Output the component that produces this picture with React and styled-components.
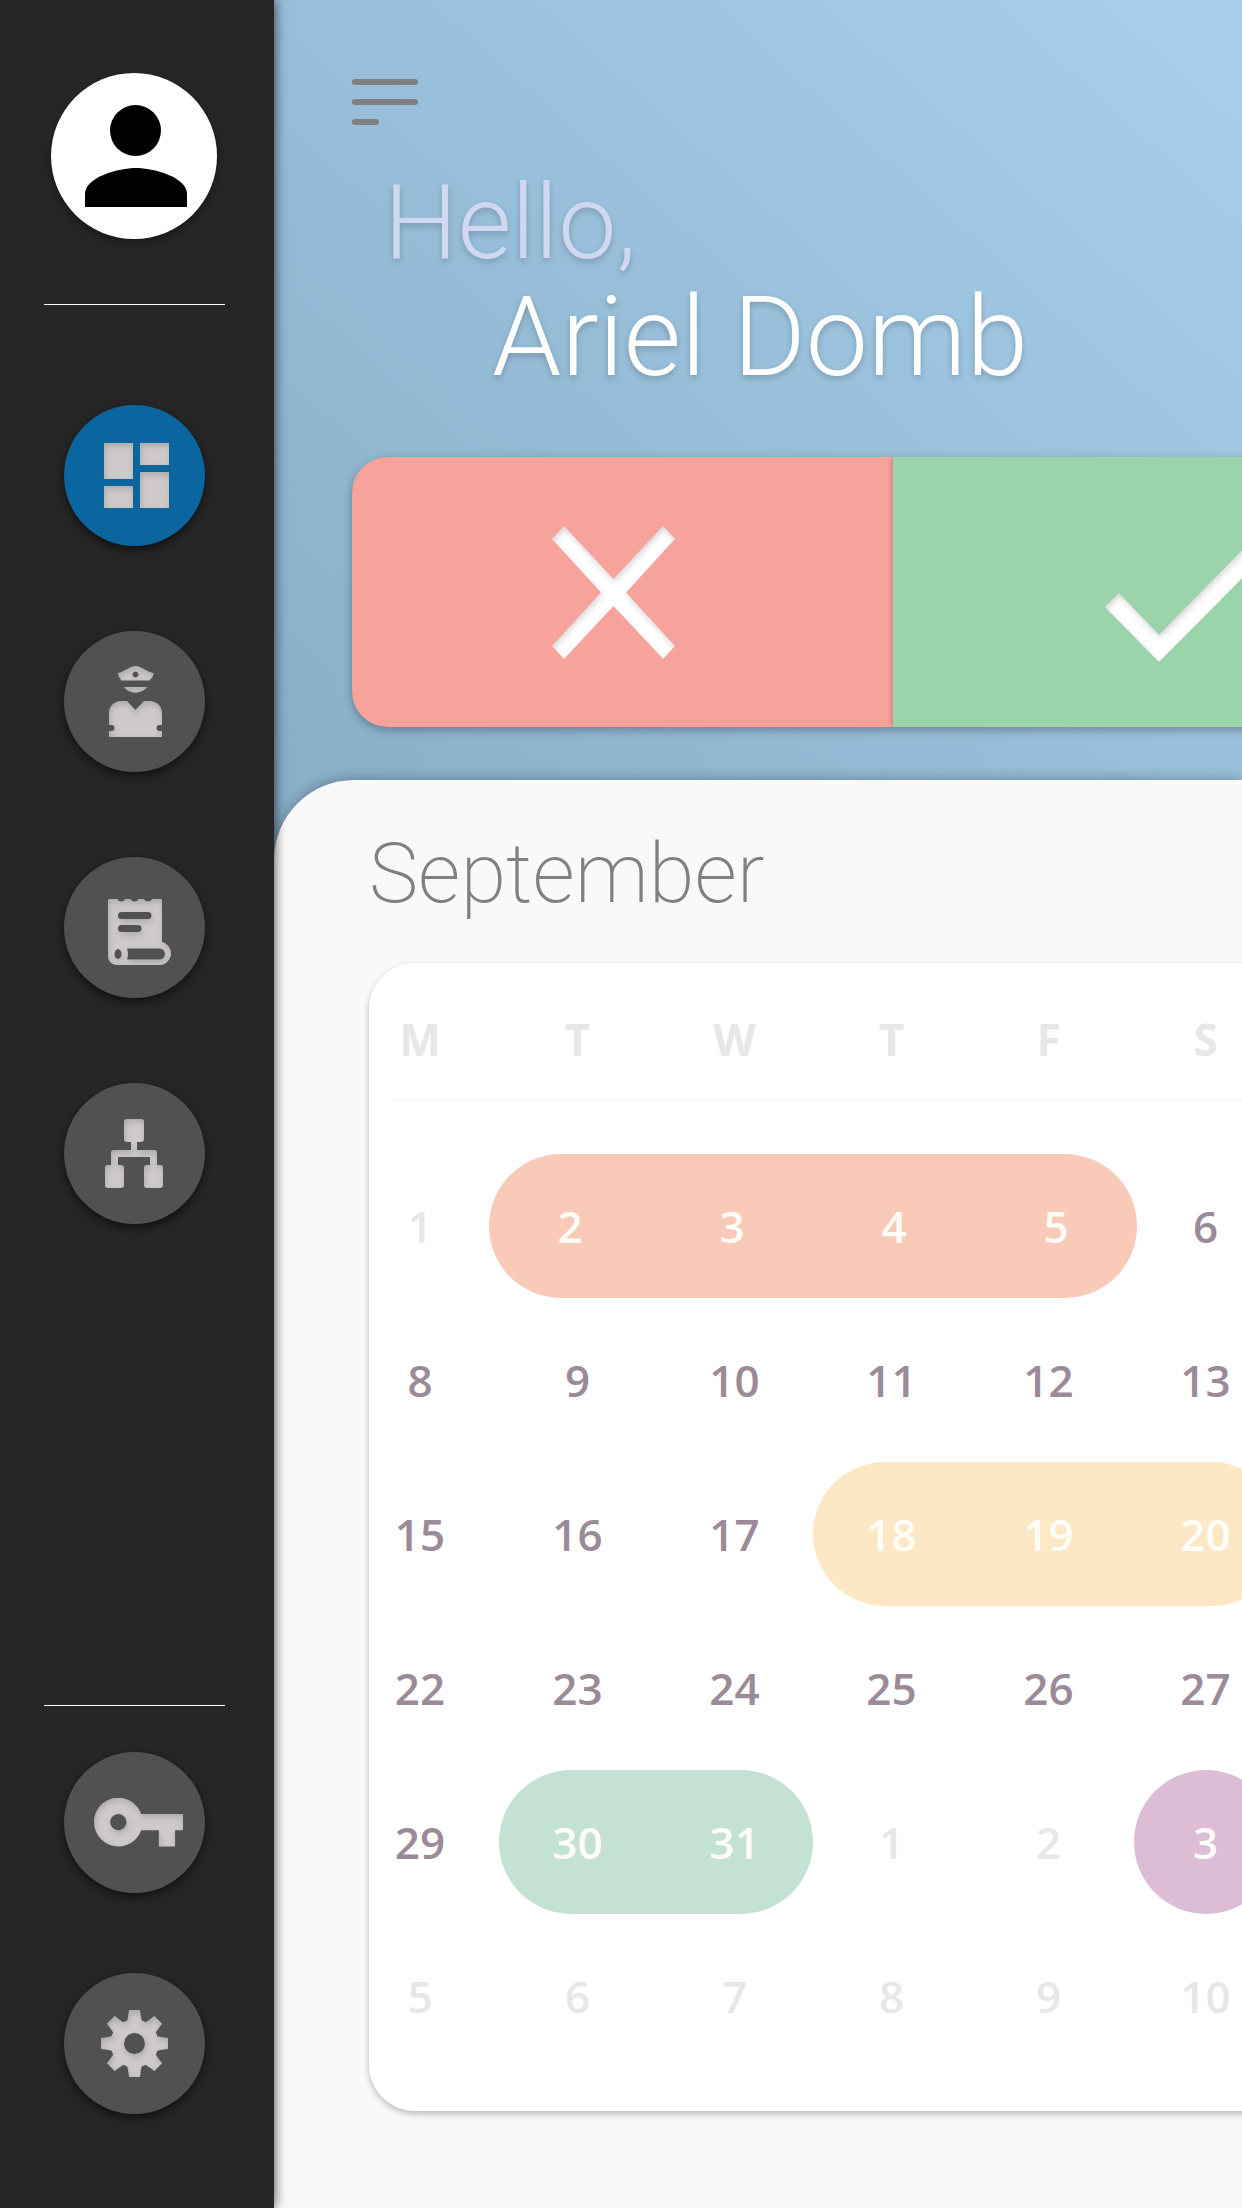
import React from "react";
import styled, { createGlobalStyle } from "styled-components";

const Global = createGlobalStyle`
  * { box-sizing: border-box; }
  body { margin: 0; font-family: Roboto, "Liberation Sans", sans-serif; }
  button { border: 0; padding: 0; margin: 0; font: inherit; cursor: pointer; }
  h1, h2 { margin: 0; }
`;

const Screen = styled.div`
  display: flex;
  min-height: 100vh;
  overflow: hidden;
`;

const Sidebar = styled.nav`
  flex: 0 0 274px;
  z-index: 1;
  display: flex;
  flex-direction: column;
  align-items: center;
  padding: 73px 6px 94px 0;
  background: #262626;
  box-shadow: 0 0 12px rgba(0, 0, 0, 0.75);
`;

const Avatar = styled.button`
  display: flex;
  align-items: center;
  justify-content: center;
  width: 166px;
  height: 166px;
  border-radius: 50%;
  background: #fff;
  box-shadow: 0 4px 8px rgba(0, 0, 0, 0.35);
`;

const Divider = styled.hr`
  width: 181px;
  height: 1px;
  margin: 65px 0 0;
  border: 0;
  background: #fff;
`;

const NavGroup = styled.div`
  display: flex;
  flex-direction: column;
  gap: ${(p) => p.$gap}px;
  margin-top: ${(p) => p.$top}px;
`;

const Bottom = styled.div`
  margin-top: auto;
  display: flex;
  flex-direction: column;
  align-items: center;
`;

const NavButton = styled.button`
  display: flex;
  align-items: center;
  justify-content: center;
  width: 141px;
  height: 141px;
  border-radius: 50%;
  background: ${(p) => (p.$active ? "#0b659f" : "#515151")};
  box-shadow: 0 4px 10px rgba(0, 0, 0, 0.55);
`;

const Main = styled.main`
  flex: 1;
  min-width: 0;
  display: flex;
  flex-direction: column;
  background: linear-gradient(222deg, #a9d0eb 0, #87adc7 1280px);
`;

const Header = styled.header`
  display: flex;
  flex-direction: column;
  align-items: flex-start;
  padding: 79px 0 53px 78px;
`;

const MenuButton = styled.button`
  display: flex;
  flex-direction: column;
  gap: 14px;
  background: none;
`;

const Bar = styled.span`
  width: ${(p) => (p.$short ? 27 : 66)}px;
  height: 6px;
  border-radius: 3px;
  background: #808080;
`;

const Greeting = styled.h1`
  display: flex;
  flex-direction: column;
  margin: 38px 0 65px;
  font-weight: 300;
  white-space: nowrap;
  text-shadow: 0 3px 6px rgba(0, 0, 0, 0.2);
`;

const Hello = styled.span`
  padding-left: 32px;
  font-size: 104px;
  line-height: 120px;
  color: #d0d7f0;
`;

const Name = styled.span`
  padding-left: 140px;
  font-size: 111px;
  line-height: 109px;
  color: #fff;
`;

const Answers = styled.div`
  display: flex;
  box-shadow: 0 3px 10px rgba(0, 0, 0, 0.3);
  border-radius: 36px;
  overflow: hidden;
`;

const Answer = styled.button`
  flex: none;
  display: flex;
  align-items: center;
  justify-content: center;
  width: ${(p) => (p.$yes ? 594 : 541)}px;
  height: 270px;
  padding-right: ${(p) => (p.$yes ? 0 : 18)}px;
  background: ${(p) => (p.$yes ? "#9bd3aa" : "#f7a29b")};
  box-shadow: 0 0 6px rgba(0, 0, 0, 0.3);
`;

const Panel = styled.section`
  flex: 1;
  padding: 46px 0 97px 95px;
  border-radius: 80px 0 0 0;
  background: #f9f9f9;
  box-shadow: 0 -2px 12px rgba(0, 0, 0, 0.25);
`;

const Month = styled.h2`
  font-weight: 200;
  font-size: 83px;
  line-height: 96px;
  color: #808080;
`;

const Card = styled.div`
  margin-top: 41px;
  margin-right: -80px;
  padding: 16px 0 38px;
  border-radius: 46px;
  background: #fff;
  box-shadow: 0 3px 6px rgba(0, 0, 0, 0.25);
`;

const Table = styled.table`
  table-layout: fixed;
  width: 915px;
  border-collapse: collapse;
  font: 600 44px/60px "Open Sans", "Noto Sans", sans-serif;
  color: #9b8a97;
`;

const FirstCol = styled.col`
  width: 130px;
`;

const HeadCell = styled.th`
  height: 120px;
  padding: 0;
  font-weight: 700;
  color: #e6e7e9;
  &:first-child { padding-right: 28px; }
`;

const Rule = styled.td`
  height: 50px;
  padding: 0 0 0 22px;
  vertical-align: top;
  &::before {
    content: "";
    display: block;
    height: 3px;
    margin-right: -200px;
    background: #f9f9fa;
  }
`;

const Cell = styled.td`
  height: 154px;
  padding: 0;
  text-align: center;
  color: ${(p) => (p.$faded ? "#e6e7e9" : "inherit")};
  &:first-child { padding-right: 28px; }
`;

const Range = styled.div`
  display: flex;
  align-items: center;
  justify-content: space-around;
  height: 144px;
  margin: 0 ${(p) => (p.$wide ? -10 : 0)}px;
  border-radius: 72px;
  background: ${(p) => p.$color};
  color: #fffdf8;
`;

const Dot = styled(Range)`
  width: 144px;
  margin: 0 auto;
`;

const InnerShade = () => (
  <filter id="inner" x="-10%" y="-10%" width="120%" height="120%">
    <feComponentTransfer in="SourceAlpha" result="inv">
      <feFuncA type="table" tableValues="1 0" />
    </feComponentTransfer>
    <feGaussianBlur in="inv" stdDeviation="3" />
    <feOffset dx="1" dy="3" result="off" />
    <feFlood floodColor="#000" floodOpacity="0.35" />
    <feComposite in2="off" operator="in" />
    <feComposite in2="SourceAlpha" operator="in" result="shade" />
    <feMerge>
      <feMergeNode in="SourceGraphic" />
      <feMergeNode in="shade" />
    </feMerge>
  </filter>
);

const Icon = ({ w, h, left = 0, top = 0, fill = "#cfcaca", children }) => (
  <svg
    width={w + left}
    height={h + top}
    viewBox={`${-left} ${-top} ${w + left} ${h + top}`}
    fill={fill}
    aria-hidden="true"
  >
    <defs><InnerShade /></defs>
    <g filter="url(#inner)">{children}</g>
  </svg>
);

const Person = () => (
  <svg width="106" height="102" viewBox="-4 0 106 102" aria-hidden="true">
    <circle cx="50.500" cy="25.500" r="25.500" />
    <path d="M0 102V89C0 72 34 63 51 63s51 9 51 26v13z" />
  </svg>
);

const Dashboard = () => (
  <Icon w={65} h={65} left={5}>
    <path d="M0 0h29v36H0zM36 0h29v22H36zM36 29h29v36H36zM0 43h29v22H0z" />
  </Icon>
);

const Officer = () => (
  <Icon w={53} h={71} left={3}>
    <path fillRule="evenodd" d="M9 7C15 6 21 0 26.500 0S38 6 44.500 7c0 3-1 4-4 7.500h-28C10 11 9 9 9 7zM26.500 5.500a3 3 0 1 0 .01 0z" />
    <path d="M15 21h23c-3 4-7 5.500-11.500 5.500S18 25 15 21z" />
    <path d="M0 71v-6h2.500a3 3 0 0 0 0-6H0V48c0-8 5-13 13-13h5l8.500 9 8.500-9h5c8 0 13 5 13 13v11h-2.500a3 3 0 0 0 0 6H53v6z" />
  </Icon>
);

const Scroll = () => (
  <Icon w={63} h={66} left={11} top={9}>
    <path fillRule="evenodd" d="M0 1.500Q0 0 1.500 0H9q4 5 8.500 0H22q4.500 5 9 0h4.500q4.500 5 9 0H52.500Q54 0 54 1.500V43c5 1 9 6 9 11.500S58 66 52 66H9c-5 0-9-4-9-9zM13.500 13a3.500 3.500 0 0 0 0 7h26.500a3.500 3.500 0 0 0 0-7zM13.500 26a3.500 3.500 0 0 0 0 7H30a3.500 3.500 0 0 0 0-7zM10 50a3.500 5 0 1 0 .01 0zM19 49.500q2 5.500 0 11h32.500a5.500 5.500 0 0 0 0-11z" />
  </Icon>
);

const OrgChart = () => (
  <Icon w={58} h={69}>
    <path d="M22 0h14q3 0 3 3v17q0 3-3 3h-4v8h17q3 0 3 3v12h3q3 0 3 3v17q0 3-3 3H42q-3 0-3-3V49q0-3 3-3h3v-8H13v8h3q3 0 3 3v17q0 3-3 3H3q-3 0-3-3V49q0-3 3-3h3V34q0-3 3-3h17v-8h-4q-3 0-3-3V3q0-3 3-3z" />
  </Icon>
);

const KeyIcon = () => (
  <Icon w={89} h={49} left={9}>
    <path transform="translate(-4 -24.500) scale(4.050)" d="M12.650 10C11.830 7.670 9.610 6 7 6c-3.310 0-6 2.690-6 6s2.690 6 6 6c2.610 0 4.830-1.670 5.650-4H17v4h4v-4h2v-4H12.650zM7 14c-1.100 0-2-.9-2-2s.9-2 2-2 2 .9 2 2-.9 2-2 2z" />
  </Icon>
);

const teeth = [0, 45, 90, 135, 180, 225, 270, 315];

const Gear = () => (
  <Icon w={67} h={67}>
    <mask id="hub">
      <rect width="67" height="67" fill="#fff" />
      <circle cx="33.500" cy="33.500" r="10.500" fill="#000" />
    </mask>
    <g mask="url(#hub)">
      <circle cx="33.500" cy="33.500" r="24" />
      {teeth.map((a) => (
        <path key={a} d="M25 14Q27 10 28 0h11q1 10 3 14z" transform={`rotate(${a} 33.500 33.500)`} />
      ))}
    </g>
  </Icon>
);

const Cross = () => (
  <Icon w={123} h={133} fill="#fff">
    <path d="M12 0L61.500 53 111 0l12 13-49 53.500L123 120l-12 13-49.500-53L12 133 0 120l49-53.500L0 13z" />
  </Icon>
);

const Check = () => (
  <Icon w={170} h={131} top={8} fill="#fff">
    <path d="M54 104L14 62 0 76l54 55L170 14 156 0z" />
  </Icon>
);

const heads = ["M", "T", "W", "T", "F", "S"];
const weeks = [
  [{ d: 1, faded: true }, { range: [2, 3, 4, 5], color: "#f9cab7", wide: true }, { d: 6 }],
  [8, 9, 10, 11, 12, 13].map((d) => ({ d })),
  [{ d: 15 }, { d: 16 }, { d: 17 }, { range: [18, 19, 20], color: "#fce8c4" }],
  [22, 23, 24, 25, 26, 27].map((d) => ({ d })),
  [
    { d: 29 },
    { range: [30, 31], color: "#c3e2d3" },
    { d: 1, faded: true },
    { d: 2, faded: true },
    { range: [3], color: "#ddbcd5" },
  ],
  [5, 6, 7, 8, 9, 10].map((d) => ({ d, faded: true })),
];

const Day = ({ item }) => {
  if (!item.range) return <Cell $faded={item.faded}>{item.d}</Cell>;
  const Shape = item.range.length === 1 ? Dot : Range;
  return (
    <Cell colSpan={item.range.length}>
      <Shape $color={item.color} $wide={item.wide}>
        {item.range.map((d) => <span key={d}>{d}</span>)}
      </Shape>
    </Cell>
  );
};

export default function App() {
  return (
    <Screen>
      <Global />
      <Sidebar>
        <Avatar aria-label="Profile"><Person /></Avatar>
        <Divider />
        <NavGroup $gap={85} $top={100}>
          <NavButton $active aria-label="Dashboard"><Dashboard /></NavButton>
          <NavButton aria-label="Officers"><Officer /></NavButton>
          <NavButton aria-label="Reports"><Scroll /></NavButton>
          <NavButton aria-label="Structure"><OrgChart /></NavButton>
        </NavGroup>
        <Bottom>
          <Divider />
          <NavGroup $gap={80} $top={46}>
            <NavButton aria-label="Access"><KeyIcon /></NavButton>
            <NavButton aria-label="Settings"><Gear /></NavButton>
          </NavGroup>
        </Bottom>
      </Sidebar>
      <Main>
        <Header>
          <MenuButton aria-label="Menu"><Bar /><Bar /><Bar $short /></MenuButton>
          <Greeting>
            <Hello>Hello,</Hello>
            <Name>Ariel Domb</Name>
          </Greeting>
          <Answers>
            <Answer aria-label="No"><Cross /></Answer>
            <Answer $yes aria-label="Yes"><Check /></Answer>
          </Answers>
        </Header>
        <Panel>
          <Month>September</Month>
          <Card>
            <Table>
              <colgroup><FirstCol /><col /><col /><col /><col /><col /></colgroup>
              <thead>
                <tr>{heads.map((h, i) => <HeadCell key={i} scope="col">{h}</HeadCell>)}</tr>
              </thead>
              <tbody>
                <tr><Rule colSpan={6} /></tr>
                {weeks.map((week, i) => (
                  <tr key={i}>{week.map((item, j) => <Day key={j} item={item} />)}</tr>
                ))}
              </tbody>
            </Table>
          </Card>
        </Panel>
      </Main>
    </Screen>
  );
}
